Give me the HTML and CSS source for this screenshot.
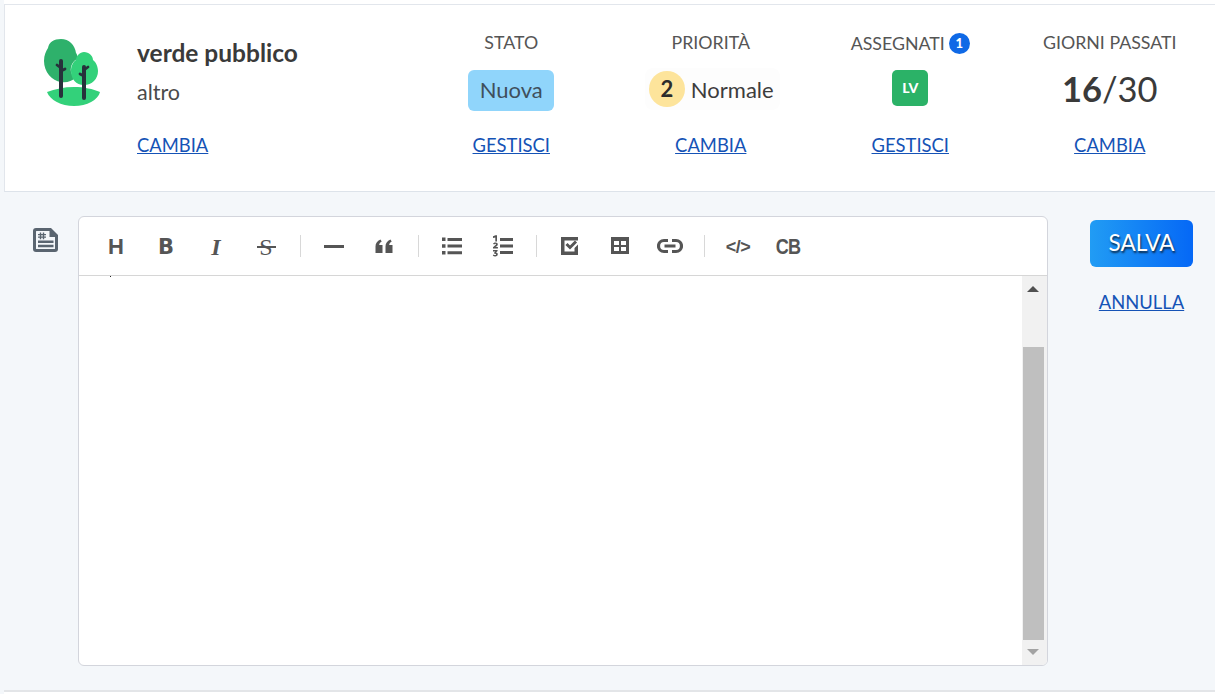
FILE: index.html
```html
<!DOCTYPE html>
<html lang="it">
<head>
<meta charset="utf-8">
<title>verde pubblico</title>
<link rel="stylesheet" href="styles.css">
</head>
<body>
<div class="page">
  <header class="head">
    <div class="cat">
      <svg class="tree" viewBox="43 38 60 70" width="60" height="70">
        <path fill="#2eb16b" d="M61 39c8 0 14 6 15 14 1 1 2 4 1 6-4 2-7 7-6 13 1 3 2 5 4 6-3 3-8 5-14 4-9-1-17-10-17-21 0-6 2-10 4-13 1-6 6-9 13-9z"/>
        <path fill="#33d17a" d="M84 52c5 0 9 4 9 8 3 2 5 7 5 11 0 8-6 14-14 14s-13-6-13-14c0-5 2-9 5-11 0-4 4-8 8-8z"/>
        <path fill="#33d17a" d="M47 92c8-3 17-5 27-5 10 0 19 2 26 5-2 8-13 14-26 14s-24-6-27-14z"/>
        <g fill="none" stroke="#27313b" stroke-linecap="round">
          <path stroke-width="4" d="M61 61v35"/>
          <path stroke-width="2.800" d="M57 65l4 3M61 71l4-2"/>
          <path stroke-width="4" d="M84 67v31"/>
          <path stroke-width="2.800" d="M84 70l4-3M80 74l4 2"/>
        </g>
      </svg>
      <div class="cat-text">
        <div class="cat-title">verde pubblico</div>
        <div class="cat-sub">altro</div>
        <a class="link" href="#">CAMBIA</a>
      </div>
    </div>
    <div class="col">
      <div class="label">STATO</div>
      <div class="value"><span class="state">Nuova</span></div>
      <a class="link" href="#">GESTISCI</a>
    </div>
    <div class="col">
      <div class="label">PRIORITÀ</div>
      <div class="value"><span class="prio"><b class="prio-num">2</b>Normale</span></div>
      <a class="link" href="#">CAMBIA</a>
    </div>
    <div class="col">
      <div class="label label-low">ASSEGNATI<span class="count">1</span></div>
      <div class="value"><span class="avatar">LV</span></div>
      <a class="link" href="#">GESTISCI</a>
    </div>
    <div class="col">
      <div class="label">GIORNI PASSATI</div>
      <div class="value days"><b>16</b>/30</div>
      <a class="link" href="#">CAMBIA</a>
    </div>
  </header>

  <main class="main">
    <svg class="doc" viewBox="0 0 25 24" width="25" height="24">
      <path fill="#5a6570" d="M3 0h15l7 7v14a3 3 0 0 1-3 3H3a3 3 0 0 1-3-3V3a3 3 0 0 1 3-3z"/>
      <path fill="#f4f7fa" d="M3.500 3h13v6h5.500v11.500a.5.5 0 0 1-.5.5H3.500a.5.5 0 0 1-.5-.5V3.500a.5.5 0 0 1 .5-.5z"/>
      <path fill="#5a6570" d="M5 12.500h15.500v2.500H5zM5 16.800h15.500v2.500H5zM6.800 4.500h1.400V6h1.600V4.500h1.400V6H13v1.300h-1.800v1.200H13v1.300h-1.800v1.400H9.800V9.800H8.200v1.400H6.800V9.800H5V8.500h1.800V7.300H5V6h1.800zM8.200 7.300v1.200h1.600V7.300z"/>
    </svg>
    <section class="editor">
      <div class="toolbar">
        <span class="tool text-tool t-h">H</span>
        <span class="tool text-tool t-b">B</span>
        <span class="tool text-tool t-i">I</span>
        <span class="tool text-tool t-s">S</span>
        <span class="sep"></span>
        <span class="tool"><svg viewBox="0 0 20 20" width="20" height="20"><path fill="#555" d="M0 9h20v3H0z"/></svg></span>
        <span class="tool"><svg viewBox="0 0 20 20" width="20" height="20"><path fill="#555" d="M1.500 17v-6.500c0-3 1.500-5.500 5-7l1.200 2c-1.500.8-2.500 2-2.500 3.500h3.300v8zM11.500 17v-6.500c0-3 1.500-5.500 5-7l1.200 2c-1.500.8-2.500 2-2.500 3.500h3.300v8z"/></svg></span>
        <span class="sep"></span>
        <span class="tool"><svg viewBox="0 0 20 20" width="20" height="20"><path fill="#555" d="M0 1.500h3.500V5H0zM0 8.200h3.500v3.500H0zM0 15h3.500v3.500H0zM5.500 2h14.500v3H5.500zM5.500 8.500h14.500v3H5.500zM5.500 15.200h14.500v3H5.500z"/></svg></span>
        <span class="tool"><svg viewBox="0 0 21 22" width="21" height="22"><path fill="#555" d="M8 3h13v3H8zM8 9.500h13v3H8zM8 16h13v3H8zM1 1.200 3.500.3H5V6.500H3.300V2.400L1 3zM1 8.800c.5-.8 1.400-1.300 2.600-1.300 1.300 0 2.200.7 2.200 1.800 0 .9-.5 1.500-1.400 2.100l-1 .7h2.500v1.400H1v-1.200l2.200-2c.5-.4.800-.7.800-1 0-.3-.2-.5-.6-.5s-.8.200-1.300.8zM1 15h4.600v1.100L4 17.400c1.100.1 1.800.8 1.800 1.800 0 1.300-1 2.200-2.600 2.200-1 0-1.800-.3-2.400-.9l.7-1.100c.5.400 1 .7 1.600.7.600 0 1-.3 1-.7s-.4-.7-1.100-.7H2.200v-1.100l1.200-1.200H1z"/></svg></span>
        <span class="sep"></span>
        <span class="tool"><svg viewBox="0 0 20 20" width="20" height="20"><path fill="#555" d="M1 1h17v3.500H4.500v11h10V12l3.500-3.500V19H1z"/><path fill="none" stroke="#555" stroke-width="3" d="M6.500 8l3.500 3.500 6-6"/></svg></span>
        <span class="tool"><svg viewBox="0 0 20 20" width="20" height="20"><path fill="#555" fill-rule="evenodd" d="M1 1h18v17H1zM4 5v4h5V5zm7 0v4h5V5zM4 11v4h5v-4zm7 0v4h5v-4z"/></svg></span>
        <span class="tool"><svg viewBox="0 0 26 16" width="26" height="16"><path fill="none" stroke="#555" stroke-width="3.200" d="M11 2.500H7a5.500 5.500 0 0 0 0 11h4M15 2.500h4a5.500 5.500 0 0 1 0 11h-4M7.500 8h11"/></svg></span>
        <span class="sep"></span>
        <span class="tool text-tool t-code">&lt;/&gt;</span>
        <span class="tool text-tool t-cb">CB</span>
      </div>
      <div class="body">
        <div class="text-area"><i class="caret"></i></div>
        <div class="scroll">
          <span class="arrow up"></span>
          <span class="thumb"></span>
          <span class="arrow down"></span>
        </div>
      </div>
    </section>
    <aside class="actions">
      <button class="save" type="button">SALVA</button>
      <a class="link" href="#">ANNULLA</a>
    </aside>
  </main>
</div>
</body>
</html>
```
FILE: styles.css
```css
* { box-sizing: border-box; }
html, body { margin: 0; height: 100%; background: #fff; }
body { font-family: "Lato", "Open Sans", sans-serif; color: #3d3d3d; overflow: hidden; }
.page { padding-left: 4px; padding-top: 4px; background: linear-gradient(#f4f7fa, #f4f7fa) left / 4px 100% no-repeat; height: 694px; }

.head {
  display: grid;
  grid-template-columns: 406.5px repeat(4, 199.5px);
  height: 188px;
  padding-top: 25px;
  background: #fff;
  border-top: 1px solid #e2e6ec;
  border-left: 1px solid #e2e6ec;
  border-bottom: 1px solid #dde3ea;
}
.cat { display: flex; padding-left: 38px; margin-top: -17px; }
.tree { flex: none; margin-top: 25px; }
.cat-text { margin-left: 34px; padding-top: 25px; display: flex; flex-direction: column; align-items: flex-start; }
.cat-title { font-size: 24.500px; font-weight: 700; line-height: 30px; color: #3a3a3a; }
.cat-sub { font-size: 21.500px; line-height: 28px; margin-top: 10px; color: #4a4a4a; }
.cat-text .link { margin-top: 27px; }

.col { display: flex; flex-direction: column; align-items: center; }
.label { height: 24px; line-height: 24px; font-size: 17.800px; color: #555; display: flex; align-items: center; }
.label-low { padding-top: 2px; }
.value { height: 44px; margin: 14px 0 21px; display: flex; align-items: center; font-size: 22px; }
.link { font-size: 18.400px; line-height: 24px; color: #1553b6; text-decoration: underline; }

.state { display: block; width: 86px; height: 41px; line-height: 40px; text-align: center; border-radius: 6px; background: #90d5fb; color: #3f4f5c; }
.prio { display: flex; align-items: center; gap: 6px; padding: 3px 6px 3px 4px; border-radius: 8px; background: #fdfdfd; margin: -2px 0 0 3px; }
.prio-num { width: 36px; height: 36px; border-radius: 50%; background: #fde49b; color: #2c2c2c; text-align: center; line-height: 36px; }
.count { width: 21px; height: 21px; margin-left: 4px; border-radius: 50%; background: #0f69e6; color: #fff; font-size: 13px; font-weight: 900; text-align: center; line-height: 21px; }
.avatar { width: 36px; height: 36px; margin-top: -4px; border-radius: 5px; background: #2bb267; color: #fff; font-size: 14px; font-weight: 900; text-align: center; line-height: 36px; }
.days { font-size: 34.500px; color: #3a3a3a; padding-bottom: 4px; }

.main { display: flex; align-items: flex-start; height: 500px; padding: 24px 0 0 28px; background: #f4f7fa; border-bottom: 2px solid #e3e5e8; }
.doc { flex: none; margin: 12px 0 0 1px; }
.editor { flex: none; width: 970px; height: 450px; margin-left: 20px; display: flex; flex-direction: column; background: #fff; border: 1px solid #d3d5dc; border-radius: 6px; overflow: hidden; }
.toolbar { flex: none; height: 59px; display: flex; align-items: center; padding: 0 0 0 21px; border-bottom: 1px solid #d6d6d6; gap: 18px; }
.tool { flex: none; position: relative; width: 32px; display: flex; align-items: center; justify-content: center; color: #555; font-family: "Liberation Sans", sans-serif; font-weight: 700; font-size: 22px; line-height: 20px; }
.text-tool { padding-top: 2px; }
.t-b { font-family: "DejaVu Sans", sans-serif; font-size: 21px; }
.t-i { font-family: "Liberation Serif", serif; font-style: italic; font-size: 24px; }
.t-s { font-family: "Liberation Serif", serif; font-weight: 400; font-size: 24px; }
.t-s::after { content: ""; position: absolute; left: 7px; right: 6px; top: 11px; height: 2px; background: #555; }
.t-code { font-size: 18px; font-weight: 700; letter-spacing: -.5px; }
.t-cb { font-size: 22px; letter-spacing: -1px; transform: scaleX(.82); }
.sep { flex: none; width: 1px; height: 22px; background: #d8d8d8; margin-right: -1px; }

.body { flex: 1; display: flex; min-height: 0; }
.text-area { flex: 1; position: relative; }
.caret { position: absolute; left: 31px; top: 0; width: 1px; height: 1px; background: #222; }
.scroll { flex: none; width: 25px; display: flex; flex-direction: column; align-items: flex-start; background: #f1f1f1; }
.arrow { width: 0; height: 0; border-left: 6px solid transparent; border-right: 6px solid transparent; margin-left: 5px; }
.arrow.up { border-bottom: 6px solid #505050; margin-top: 10px; }
.thumb { width: 21px; height: 293px; background: #bfbfbf; margin: 55px 0 0 1px; }
.arrow.down { border-top: 6px solid #a3a3a3; margin-top: 9px; }

.actions { flex: none; width: 103px; margin-left: 42px; display: flex; flex-direction: column; align-items: center; padding-top: 4px; }
.save { width: 103px; height: 47px; padding: 0 0 3px; border: 0; border-radius: 6px; background: linear-gradient(90deg, #219cf4, #0568f6); color: #fff; font-family: inherit; font-size: 22.500px; text-shadow: 1px 2px 2px #0b2a4a; }
.actions .link { margin-top: 23px; }
```
